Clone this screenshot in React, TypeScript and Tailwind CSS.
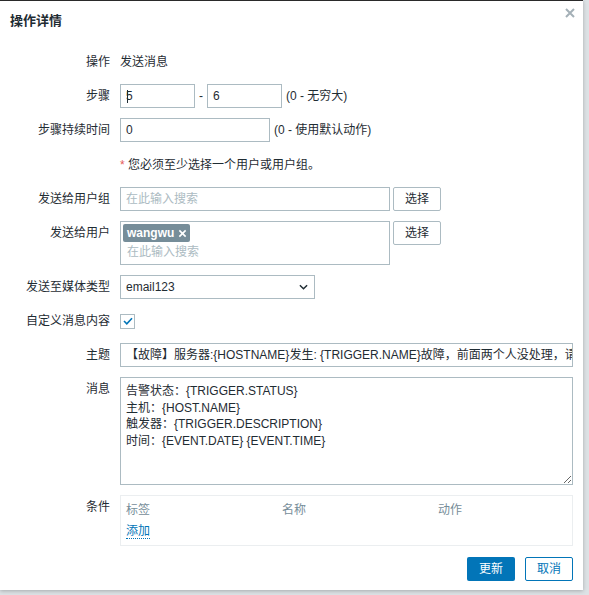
import React from "react";

const font = "font-['Liberation_Sans','Noto_Sans_CJK_SC',sans-serif]";
const inputCls =
  "h-[24px] border border-[#acbbc2] bg-white px-[5px] flex items-center text-[12px] text-[#1f2c33]";

function Row({
  label,
  top = false,
  className = "",
  children,
}: {
  label: string;
  top?: boolean;
  className?: string;
  children?: React.ReactNode;
}) {
  return (
    <div className={`flex ${top ? "items-start" : "items-center"} ${className}`}>
      <div className="w-[110px] shrink-0 h-[24px] flex items-center justify-end text-right">
        {label}
      </div>
      <div className="ml-[10px] flex items-center min-w-0">{children}</div>
    </div>
  );
}

function GreyButton({ children }: { children: React.ReactNode }) {
  return (
    <button className="h-[24px] w-[48px] ml-[3px] border border-[#acbbc2] rounded-[2px] bg-white text-[12px] text-[#1f2c33]">
      {children}
    </button>
  );
}

export default function App() {
  return (
    <div className={`w-[589px] h-[595px] bg-[#dde2e5] overflow-hidden ${font} text-[12px] text-[#1f2c33]`}>
      <div className="w-[583px] h-[590px] bg-white border-t border-[#2a2a2a] shadow-[0_1px_4px_rgba(0,0,0,0.25)] flex flex-col">
        {/* header */}
        <div className="h-[40px] flex items-center justify-between pl-[10px] pr-[8px]">
          <h4 className="text-[13px] font-bold text-[#1f2c33]">操作详情</h4>
          <svg viewBox="0 0 10 10" className="w-[10px] h-[10px] -mt-[16px]">
            <path d="M1 1 L9 9 M9 1 L1 9" stroke="#a4b0b7" strokeWidth="2" />
          </svg>
        </div>

        {/* body */}
        <div className="pt-[9px] flex flex-col gap-[10px]">
          <Row label="操作" className="h-[24px]">
            <span>发送消息</span>
          </Row>

          <Row label="步骤">
            <div className="relative">
              <div className={`${inputCls} w-[75px] border-[#0275b8]`}>5</div>
              <span className="absolute left-[7px] top-[6px] w-[1px] h-[13px] bg-[#1f2c33]" />
            </div>
            <span className="mx-[4px]">-</span>
            <div className={`${inputCls} w-[75px]`}>6</div>
            <span className="ml-[4px]">(0 - 无穷大)</span>
          </Row>

          <Row label="步骤持续时间">
            <div className={`${inputCls} w-[150px]`}>0</div>
            <span className="ml-[4px]">(0 - 使用默认动作)</span>
          </Row>

          <Row label="" className="h-[25px]">
            <span>
              <span className="text-[#e45959]">*</span> 您必须至少选择一个用户或用户组。
            </span>
          </Row>

          <Row label="发送给用户组">
            <div className={`${inputCls} w-[270px] text-[#acbbc2]`}>在此输入搜索</div>
            <GreyButton>选择</GreyButton>
          </Row>

          <Row label="发送给用户" top>
            <div className="flex items-start">
              <div className="w-[270px] h-[44px] border border-[#acbbc2] bg-white pt-[2px] px-[2px] flex flex-col">
                <div className="h-[18px] w-fit bg-[#768d99] rounded-[2px] pl-[4px] pr-[3px] flex items-center gap-[4px] text-white font-bold">
                  wangwu
                  <svg viewBox="0 0 10 10" className="w-[9px] h-[9px]">
                    <path d="M1.5 1.5 L8.5 8.5 M8.5 1.5 L1.5 8.5" stroke="#ffffff" strokeWidth="1.8" />
                  </svg>
                </div>
                <div className="h-[20px] pl-[4px] flex items-center text-[#acbbc2]">在此输入搜索</div>
              </div>
              <GreyButton>选择</GreyButton>
            </div>
          </Row>

          <Row label="发送至媒体类型">
            <div className={`${inputCls} w-[195px] justify-between pr-[6px]`}>
              <span>email123</span>
              <svg viewBox="0 0 10 6" className="w-[9px] h-[6px]">
                <path d="M1 1 L5 5 L9 1" stroke="#1f2c33" strokeWidth="1.6" fill="none" />
              </svg>
            </div>
          </Row>

          <Row label="自定义消息内容" className="h-[24px]">
            <div className="w-[15px] h-[15px] border border-[#acbbc2] bg-white flex items-center justify-center">
              <svg viewBox="0 0 12 10" className="w-[10px] h-[8px]">
                <path d="M1 5 L4.5 8.5 L11 1.5" stroke="#0275b8" strokeWidth="2" fill="none" />
              </svg>
            </div>
          </Row>

          <Row label="主题">
            <div className={`${inputCls} w-[453px] overflow-hidden whitespace-nowrap`}>
              【故障】服务器:{"{HOSTNAME}"}发生: {"{TRIGGER.NAME}"}故障，前面两个人没处理，请尽快处理
            </div>
          </Row>

          <Row label="消息" top>
            <textarea
              readOnly
              className={`w-[453px] h-[108px] border border-[#acbbc2] px-[5px] pt-[5px] text-[12px] leading-[16.7px] text-[#1f2c33] outline-none ${font}`}
              defaultValue={
                "告警状态：{TRIGGER.STATUS}\n主机：{HOST.NAME}\n触发器：{TRIGGER.DESCRIPTION}\n时间：{EVENT.DATE} {EVENT.TIME}"
              }
            />
          </Row>

          <Row label="条件" top>
            <div className="w-[453px] h-[51px] border border-[#ebeef0] px-[5px] pt-[5px]">
              <div className="grid grid-cols-[156px_156px_1fr] h-[18px] items-center text-[#768d99]">
                <span>标签</span>
                <span>名称</span>
                <span>动作</span>
              </div>
              <div className="mt-[3px] h-[18px] flex items-center">
                <span className="text-[#0275b8] border-b border-dotted border-[#0275b8] leading-[14px]">添加</span>
              </div>
            </div>
          </Row>
        </div>

        {/* footer */}
        <div className="mt-[11px] flex justify-end gap-[10px] pr-[10px]">
          <button className="h-[24px] w-[48px] rounded-[2px] bg-[#0275b8] text-white text-[12px]">更新</button>
          <button className="h-[24px] w-[48px] rounded-[2px] border border-[#0275b8] bg-white text-[#0275b8] text-[12px]">
            取消
          </button>
        </div>
      </div>
    </div>
  );
}
